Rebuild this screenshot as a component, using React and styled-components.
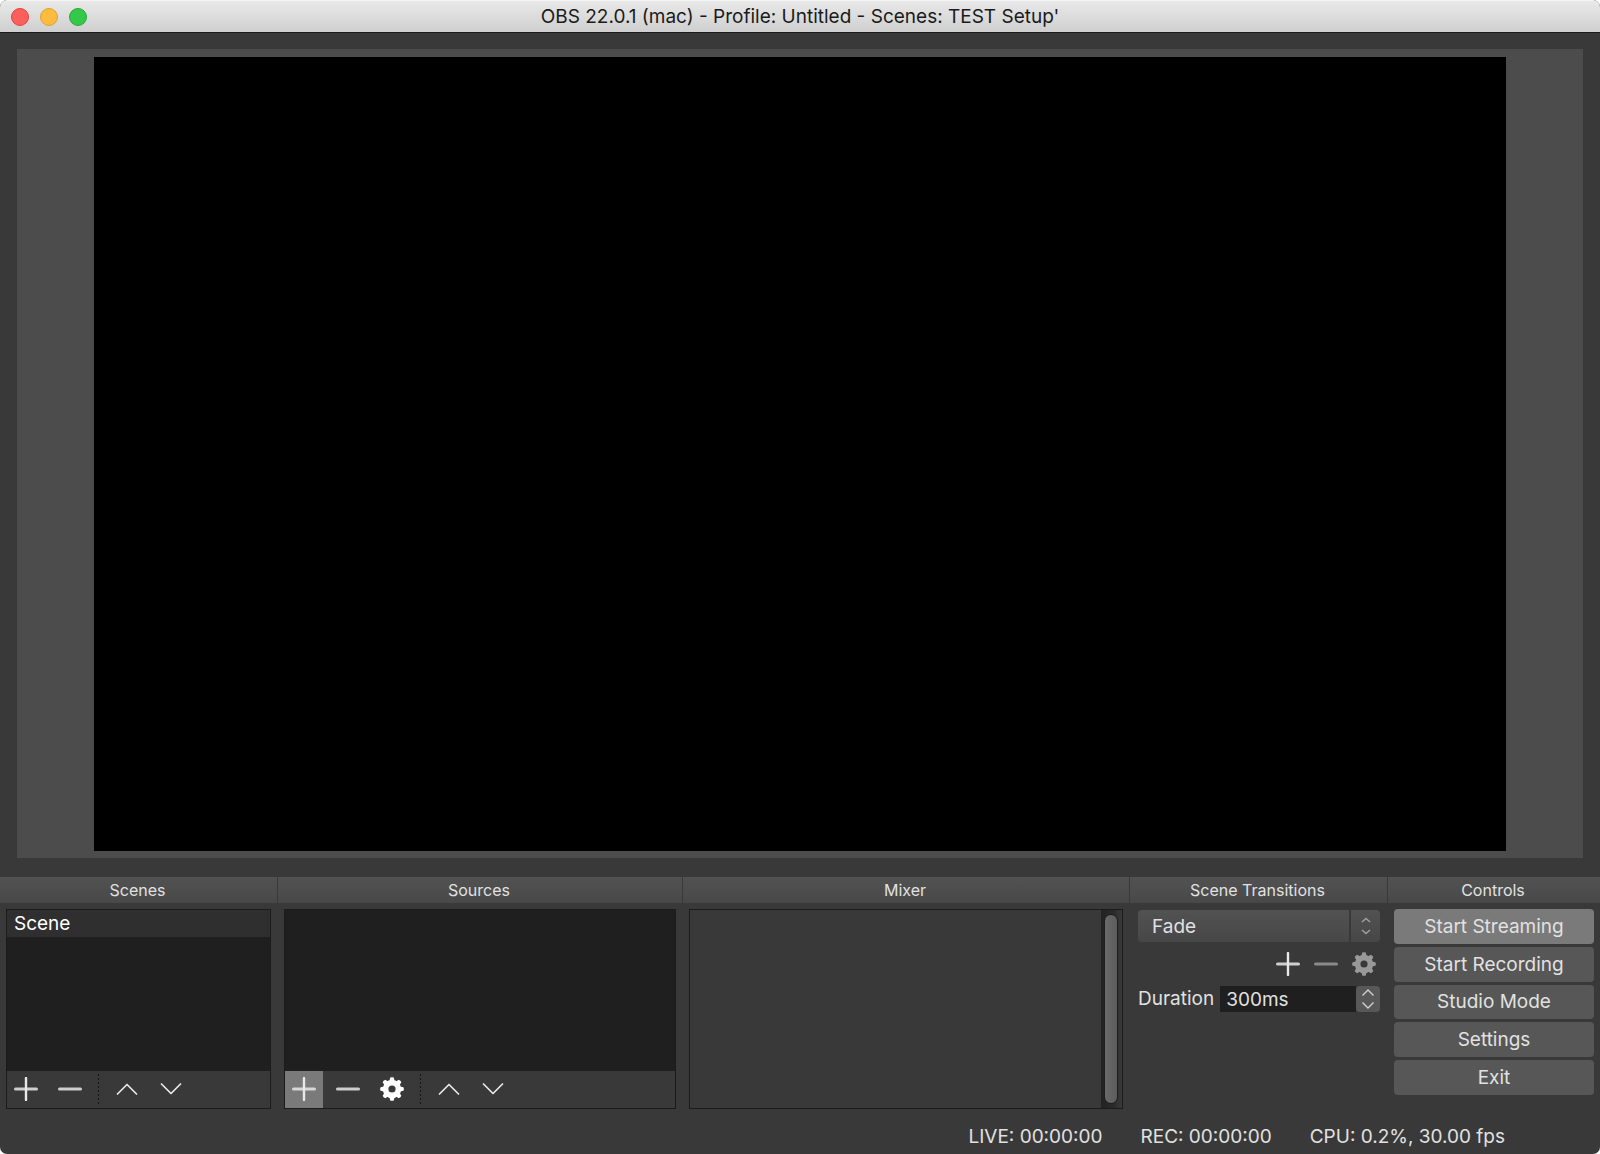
import { useState } from "react";
import styled, { createGlobalStyle } from "styled-components";

const controls = ["Start Streaming", "Start Recording", "Studio Mode", "Settings", "Exit"];

function PlusIcon(){
    return(
        <Icon viewBox="0 0 24 24">
            <path d="M1.5 12h21" stroke="currentColor" strokeWidth="3" strokeLinecap="round" opacity="0.85" />
            <path d="M12 1v22" stroke="currentColor" strokeWidth="2.4" strokeLinecap="round" />
        </Icon>
    )
}

function MinusIcon(){
    return(
        <Icon viewBox="0 0 24 24">
            <path d="M1.5 12h21" stroke="currentColor" strokeWidth="3" strokeLinecap="round" opacity="0.85" />
        </Icon>
    )
}

function UpIcon(){
    return(
        <Icon viewBox="0 0 24 24">
            <path d="M2 17.5L12 7.5L22 17.5" fill="none" stroke="currentColor" strokeWidth="1.7" strokeLinejoin="round" />
        </Icon>
    )
}

function DownIcon(){
    return(
        <Icon viewBox="0 0 24 24">
            <path d="M2 6.5L12 16.5L22 6.5" fill="none" stroke="currentColor" strokeWidth="1.7" strokeLinejoin="round" />
        </Icon>
    )
}

function GearIcon(){
    const teeth = [0, 45, 90, 135, 180, 225, 270, 315];

    return(
        <Icon viewBox="0 0 24 24">
            <circle cx="12" cy="12" r="6.4" fill="none" stroke="currentColor" strokeWidth="5.6" />
            {teeth.map((angle) => (
                <path key={angle} d="M9.4 4L10.2 0.6Q12 -0.3 13.8 0.6L14.6 4Z" fill="currentColor" transform={`rotate(${angle} 12 12)`} />
            ))}
        </Icon>
    )
}

function Dock({ title, children }){
    return(
        <DockColumn>
            <DockTitle>{title}</DockTitle>
            <DockBody>{children}</DockBody>
        </DockColumn>
    )
}

export default function App(){
    const [transition, setTransition] = useState("Fade");
    const [duration, setDuration] = useState(300);

    return(
        <Window>
            <GlobalStyle />
            <TitleBar>
                <Lights>
                    <Light color="#fc605c" edge="#e2443f" aria-label="Close" />
                    <Light color="#fdbc40" edge="#e0a033" aria-label="Minimize" />
                    <Light color="#34c84a" edge="#27aa35" aria-label="Zoom" />
                </Lights>
                <Title>OBS 22.0.1 (mac) - Profile: Untitled - Scenes: TEST Setup'</Title>
            </TitleBar>

            <Preview>
                <Canvas />
            </Preview>

            <Docks>
                <Dock title="Scenes">
                    <Panel>
                        <List>
                            <SceneItem>Scene</SceneItem>
                        </List>
                        <Toolbar>
                            <ToolButton aria-label="Add scene"><PlusIcon /></ToolButton>
                            <ToolButton aria-label="Remove scene"><MinusIcon /></ToolButton>
                            <Separator />
                            <ToolButton aria-label="Move scene up"><UpIcon /></ToolButton>
                            <ToolButton aria-label="Move scene down"><DownIcon /></ToolButton>
                        </Toolbar>
                    </Panel>
                </Dock>

                <Dock title="Sources">
                    <Panel>
                        <List />
                        <Toolbar>
                            <ToolButton $active aria-label="Add source"><PlusIcon /></ToolButton>
                            <ToolButton aria-label="Remove source"><MinusIcon /></ToolButton>
                            <ToolButton $bright aria-label="Source properties"><GearIcon /></ToolButton>
                            <Separator />
                            <ToolButton aria-label="Move source up"><UpIcon /></ToolButton>
                            <ToolButton aria-label="Move source down"><DownIcon /></ToolButton>
                        </Toolbar>
                    </Panel>
                </Dock>

                <Dock title="Mixer">
                    <MixerPanel>
                        <ScrollTrack>
                            <ScrollThumb />
                        </ScrollTrack>
                    </MixerPanel>
                </Dock>

                <Dock title="Scene Transitions">
                    <Transitions>
                        <SelectBox>
                            <Select aria-label="Transition" value={transition} onChange={(e) => {setTransition(e.target.value)}}>
                                <option>Fade</option>
                                <option>Cut</option>
                            </Select>
                            <SelectArrows>
                                <svg width="10" height="18" viewBox="0 0 10 18" fill="none" stroke="#a0a0a0" strokeWidth="1.5">
                                    <path d="M1 5L5 1.5L9 5M1 13L5 16.5L9 13" />
                                </svg>
                            </SelectArrows>
                        </SelectBox>
                        <TransitionTools>
                            <ToolButton $small aria-label="Add transition"><PlusIcon /></ToolButton>
                            <ToolButton $small disabled aria-label="Remove transition"><MinusIcon /></ToolButton>
                            <ToolButton $small disabled aria-label="Transition properties"><GearIcon /></ToolButton>
                        </TransitionTools>
                        <DurationRow>
                            <label htmlFor="duration">Duration</label>
                            <DurationInput id="duration" value={duration + "ms"} onChange={(e) => {setDuration(parseInt(e.target.value) || 0)}} />
                            <Spinner>
                                <SpinButton aria-label="Increase" onClick={() => {setDuration(duration + 50)}}>
                                    <svg width="12" height="7" viewBox="0 0 12 7" fill="none" stroke="#d0d0d0" strokeWidth="1.4">
                                        <path d="M0.5 6.5L6 1L11.5 6.5" />
                                    </svg>
                                </SpinButton>
                                <SpinButton aria-label="Decrease" onClick={() => {setDuration(duration - 50)}}>
                                    <svg width="12" height="7" viewBox="0 0 12 7" fill="none" stroke="#d0d0d0" strokeWidth="1.4">
                                        <path d="M0.5 0.5L6 6L11.5 0.5" />
                                    </svg>
                                </SpinButton>
                            </Spinner>
                        </DurationRow>
                    </Transitions>
                </Dock>

                <Dock title="Controls">
                    <ControlList>
                        {controls.map((name, i) => (
                            <ControlButton key={name} $active={i === 0}>{name}</ControlButton>
                        ))}
                    </ControlList>
                </Dock>
            </Docks>

            <StatusBar>
                <span>LIVE: 00:00:00</span>
                <span>REC: 00:00:00</span>
                <span>CPU: 0.2%, 30.00 fps</span>
            </StatusBar>
        </Window>
    )
}

const GlobalStyle = createGlobalStyle`
    * {
        box-sizing: border-box;
    }
    body {
        margin: 0;
        background: #FFFFFF;
    }
    body, button, input, select {
        font-family: Inter, "Liberation Sans", sans-serif;
        font-size: 19px;
        color: #E1E1E1;
    }
    button {
        border: none;
        padding: 0;
    }
`
const Window = styled.main`
    min-height: 100vh;
    background: #393939;
    border-radius: 7px;
    overflow: hidden;

    display: flex;
    flex-direction: column;
`
const TitleBar = styled.header`
    height: 33px;
    padding: 0 11px;
    background: linear-gradient(#E9E9E9, #CFCFCF);
    border-top: 1px solid #F4F4F4;
    border-bottom: 1px solid #1C1C1C;

    display: grid;
    grid-template-columns: 1fr auto 1fr;
    align-items: center;
`
const Lights = styled.div`
    display: flex;
    gap: 11px;
`
const Light = styled.button`
    width: 18px;
    height: 18px;
    border-radius: 50%;
    background: ${(props) => props.color};
    border: 1px solid ${(props) => props.edge};
`
const Title = styled.h1`
    margin: 0;
    font-weight: 400;
    font-size: 19px;
    line-height: 24px;
    color: #1A1A1A;
`
const Preview = styled.section`
    flex: 1 1 0;
    min-height: 0;
    margin: 16px 17px 19px;
    padding: 8px 0 7px;
    background: #4C4C4C;

    display: flex;
    justify-content: center;
`
const Canvas = styled.div`
    height: 100%;
    aspect-ratio: 16 / 9;
    background: #000000;
`
const Docks = styled.section`
    display: grid;
    grid-template-columns: 277fr 404fr 446fr 257fr 212fr;
    gap: 1px;
`
const DockColumn = styled.section`
    min-width: 0;
    display: flex;
    flex-direction: column;
`
const DockTitle = styled.h2`
    margin: 0;
    height: 26px;
    padding-right: 2px;
    background: linear-gradient(#525252, #484848);

    font-weight: 400;
    font-size: 16px;
    line-height: 26px;
    text-align: center;
`
const DockBody = styled.div`
    flex: 1;
    padding: 6px 6px 0;

    display: flex;
    flex-direction: column;
`
const Panel = styled.div`
    height: 200px;
    border: 1px solid #1B1B1B;

    display: flex;
    flex-direction: column;
`
const List = styled.ul`
    flex: 1;
    margin: 0;
    padding: 0;
    background: #1F1F1F;
    list-style: none;
`
const SceneItem = styled.li`
    height: 27px;
    padding: 0 7px;
    background: #2F2F2F;
    color: #FFFFFF;
    line-height: 27px;
`
const Toolbar = styled.div`
    height: 37px;
    display: flex;
    gap: 6px;
`
const ToolButton = styled.button`
    width: ${(props) => props.$small ? "32px" : "38px"};
    height: 100%;
    padding-bottom: ${(props) => props.$small ? "0" : "2px"};
    background: ${(props) => props.$active ? "#7A7A7A" : "transparent"};
    color: ${(props) => props.$bright ? "#FFFFFF" : "#E8E8E8"};

    display: flex;
    align-items: center;
    justify-content: center;

    &:disabled {
        color: #999999;
    }
`
const Icon = styled.svg`
    width: 24px;
    height: 24px;
`
const Separator = styled.div`
    width: 7px;
    margin: 2px 0;
    background: radial-gradient(circle, #161616 1px, transparent 1px) center top / 7px 4px repeat-y;
`
const MixerPanel = styled.div`
    height: 200px;
    border: 1px solid #1B1B1B;

    display: flex;
    justify-content: flex-end;
`
const ScrollTrack = styled.div`
    width: 21px;
    padding: 4px 4px 4px 3px;
    background: linear-gradient(to right, #222222, #2A2A2A 60%, #3A3A3A);

    display: flex;
`
const ScrollThumb = styled.div`
    flex: 1;
    border: 1px solid #1E1E1E;
    border-radius: 7px;
    background: linear-gradient(to right, #6A6A6A, #5C5C5C);
`
const Transitions = styled.div`
    padding: 1px 1px 0 2px;
`
const SelectBox = styled.div`
    position: relative;
`
const Select = styled.select`
    display: block;
    width: 100%;
    height: 32px;
    padding: 0 40px 0 14px;
    appearance: none;
    border: none;
    border-radius: 4px;
    background: linear-gradient(#525252, #474747);
`
const SelectArrows = styled.div`
    position: absolute;
    top: 0;
    right: 0;
    width: 31px;
    height: 100%;
    border-left: 2px solid #393939;
    pointer-events: none;

    display: flex;
    align-items: center;
    justify-content: center;
`
const TransitionTools = styled.div`
    height: 44px;

    display: flex;
    justify-content: flex-end;
    gap: 6px;
`
const DurationRow = styled.div`
    height: 26px;
    line-height: 26px;

    display: flex;
`
const DurationInput = styled.input`
    flex: 1;
    min-width: 0;
    margin-left: 6px;
    padding: 0 6px;
    border: none;
    background: #1F1F1F;
`
const Spinner = styled.div`
    width: 24px;
    border-radius: 4px;
    background: #585858;

    display: flex;
    flex-direction: column;
`
const SpinButton = styled.button`
    flex: 1;
    background: transparent;

    display: flex;
    align-items: center;
    justify-content: center;
`
const ControlList = styled.div`
    height: 186px;

    display: flex;
    flex-direction: column;
    gap: 3px;
`
const ControlButton = styled.button`
    flex: 1;
    border-radius: 4px;
    background: ${(props) => props.$active ? "#7A7A7A" : "#575757"};
`
const StatusBar = styled.footer`
    height: 45px;
    padding: 10px 95px 0 0;

    display: flex;
    align-items: center;
    justify-content: flex-end;
    gap: 38px;
`
